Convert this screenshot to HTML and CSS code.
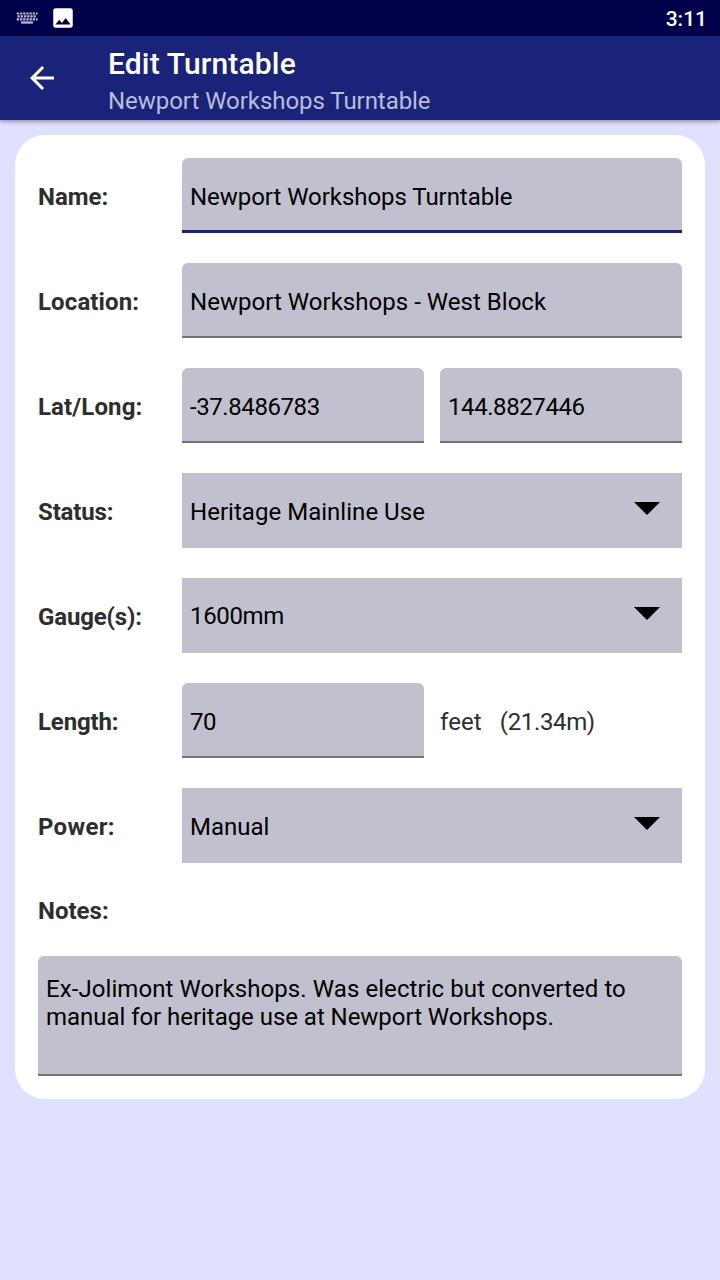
FILE: index.html
```html
<!DOCTYPE html>
<html lang="en">
<head>
<meta charset="utf-8">
<title>Edit Turntable</title>
<link rel="stylesheet" href="styles.css">
</head>
<body>
<div class="statusbar">
  <svg class="kbd" width="24" height="24" viewBox="0 0 24 24"><g stroke="#bdbdd2" fill="none"><path stroke-width="2.200" stroke-dasharray="2.300 .9" d="M1.700 7.500h20.900"/><path stroke-width="2.200" stroke-dasharray="2.300 .9" d="M2.500 10.400h19"/><path stroke-width="2.200" stroke-dasharray="2.300 .9" d="M1.700 13.400h20.900"/><path stroke-width="2.200" d="M6 16.500h12"/></g></svg>
  <svg class="pic" width="26" height="26" viewBox="0 0 24 24"><path fill="#fff" d="M21 19V5c0-1.100-.9-2-2-2H5c-1.100 0-2 .9-2 2v14c0 1.100.9 2 2 2h14c1.100 0 2-.9 2-2zM8.500 13.500l2.500 3.010L14.500 12l4.500 6H5l3.500-4.500z"/></svg>
  <span class="clock">3:11</span>
</div>
<header class="appbar">
  <svg class="back" width="36" height="36" viewBox="0 0 24 24"><path fill="#fff" d="M20 11H7.830l5.590-5.590L12 4l-8 8 8 8 1.410-1.410L7.830 13H20v-2z"/></svg>
  <div class="titles">
    <h1 class="title">Edit Turntable</h1>
    <div class="subtitle">Newport Workshops Turntable</div>
  </div>
</header>
<main class="card">
  <div class="row"><span class="label">Name:</span><div class="field focused">Newport Workshops Turntable</div></div>
  <div class="row"><span class="label wide">Location:</span><div class="field west">Newport Workshops - West Block</div></div>
  <div class="row"><span class="label wide">Lat/Long:</span><div class="field digits">-37.8486783</div><div class="field digits">144.8827446</div></div>
  <div class="row"><span class="label tight">Status:</span><div class="select west">Heritage Mainline Use<span class="arrow"></span></div></div>
  <div class="row"><span class="label tight">Gauge(s):</span><div class="select gauge">1600mm<span class="arrow"></span></div></div>
  <div class="row"><span class="label tight">Length:</span><div class="field digits">70</div><div class="unit"><span>feet</span><span class="metres">(21.34m)</span></div></div>
  <div class="row"><span class="label power">Power:</span><div class="select">Manual<span class="arrow"></span></div></div>
  <div class="label notes-label">Notes:</div>
  <div class="field notes"><span class="first-line">Ex-Jolimont Workshops. Was electric but converted to</span> <span class="second-line">manual for heritage use at Newport Workshops.</span></div>
</main>
</body>
</html>
```
FILE: styles.css
```css
* { box-sizing: border-box; }
body { margin: 0; min-height: 1280px; background: #e0e0ff; font-family: Roboto, sans-serif; font-size: 24px; color: #000; }
.statusbar { height: 36px; background: #00004b; display: flex; align-items: center; padding: 0 13px 0 15px; }
.pic { margin-left: 11px; }
.clock { margin-left: auto; color: #fff; font-size: 21px; font-weight: 500; line-height: 36px; padding-top: 2px; }
.appbar { height: 84px; background: #1a237a; display: flex; padding-left: 24px; box-shadow: 0 1px 5px rgba(0,0,0,.45); }
.back { margin-top: 24px; }
.titles { margin-left: 48px; padding-top: 10px; }
.title { margin: 0; color: #fff; font-size: 30px; font-weight: 500; line-height: 36px; letter-spacing: .15px; }
.subtitle { color: #babddb; font-size: 24px; line-height: 28px; padding-top: 5px; letter-spacing: -.05px; }
.card { margin: 15px 15px 0; height: 964px; background: #fff; border-radius: 30px; padding: 23px; }
.row { display: flex; height: 75px; margin-bottom: 30px; gap: 16px; align-items: center; }
.label { width: 128px; flex: none; font-weight: 700; color: #2e2e2e; line-height: 28px; padding-top: 2px; }
.wide { letter-spacing: .12px; }
.power { letter-spacing: .3px; }
.tight { letter-spacing: -.15px; }
.field, .select { flex: 1 1 0; height: 75px; background: #c1c0ce; padding: 25px 8px 0; line-height: 28px; white-space: nowrap; }
.field { border-radius: 6px 6px 0 0; border-bottom: 2px solid #73727b; }
.focused { border-bottom: 3px solid #1a237e; letter-spacing: -.05px; }
.west { letter-spacing: .03px; }
.digits { letter-spacing: -.42px; }
.metres { letter-spacing: -.35px; }
.select { display: flex; justify-content: space-between; padding-right: 22px; }
.gauge { padding-top: 24px; letter-spacing: -.35px; }
.arrow { width: 26px; height: 13px; margin-top: 4px; background: #000; clip-path: polygon(0 0, 100% 0, 50% 100%); }
.gauge .arrow { margin-top: 5px; }
.unit { flex: 1 1 0; display: flex; gap: 18px; color: #2e2e2e; line-height: 28px; padding: 2px 16px 0 0; letter-spacing: .1px; }
.notes-label { padding-top: 4px; }
.notes { height: 120px; margin-top: 31px; padding: 19px 8px 0; }
.first-line, .second-line { display: block; }
.first-line { letter-spacing: .08px; }
.second-line { letter-spacing: -.04px; }
```
